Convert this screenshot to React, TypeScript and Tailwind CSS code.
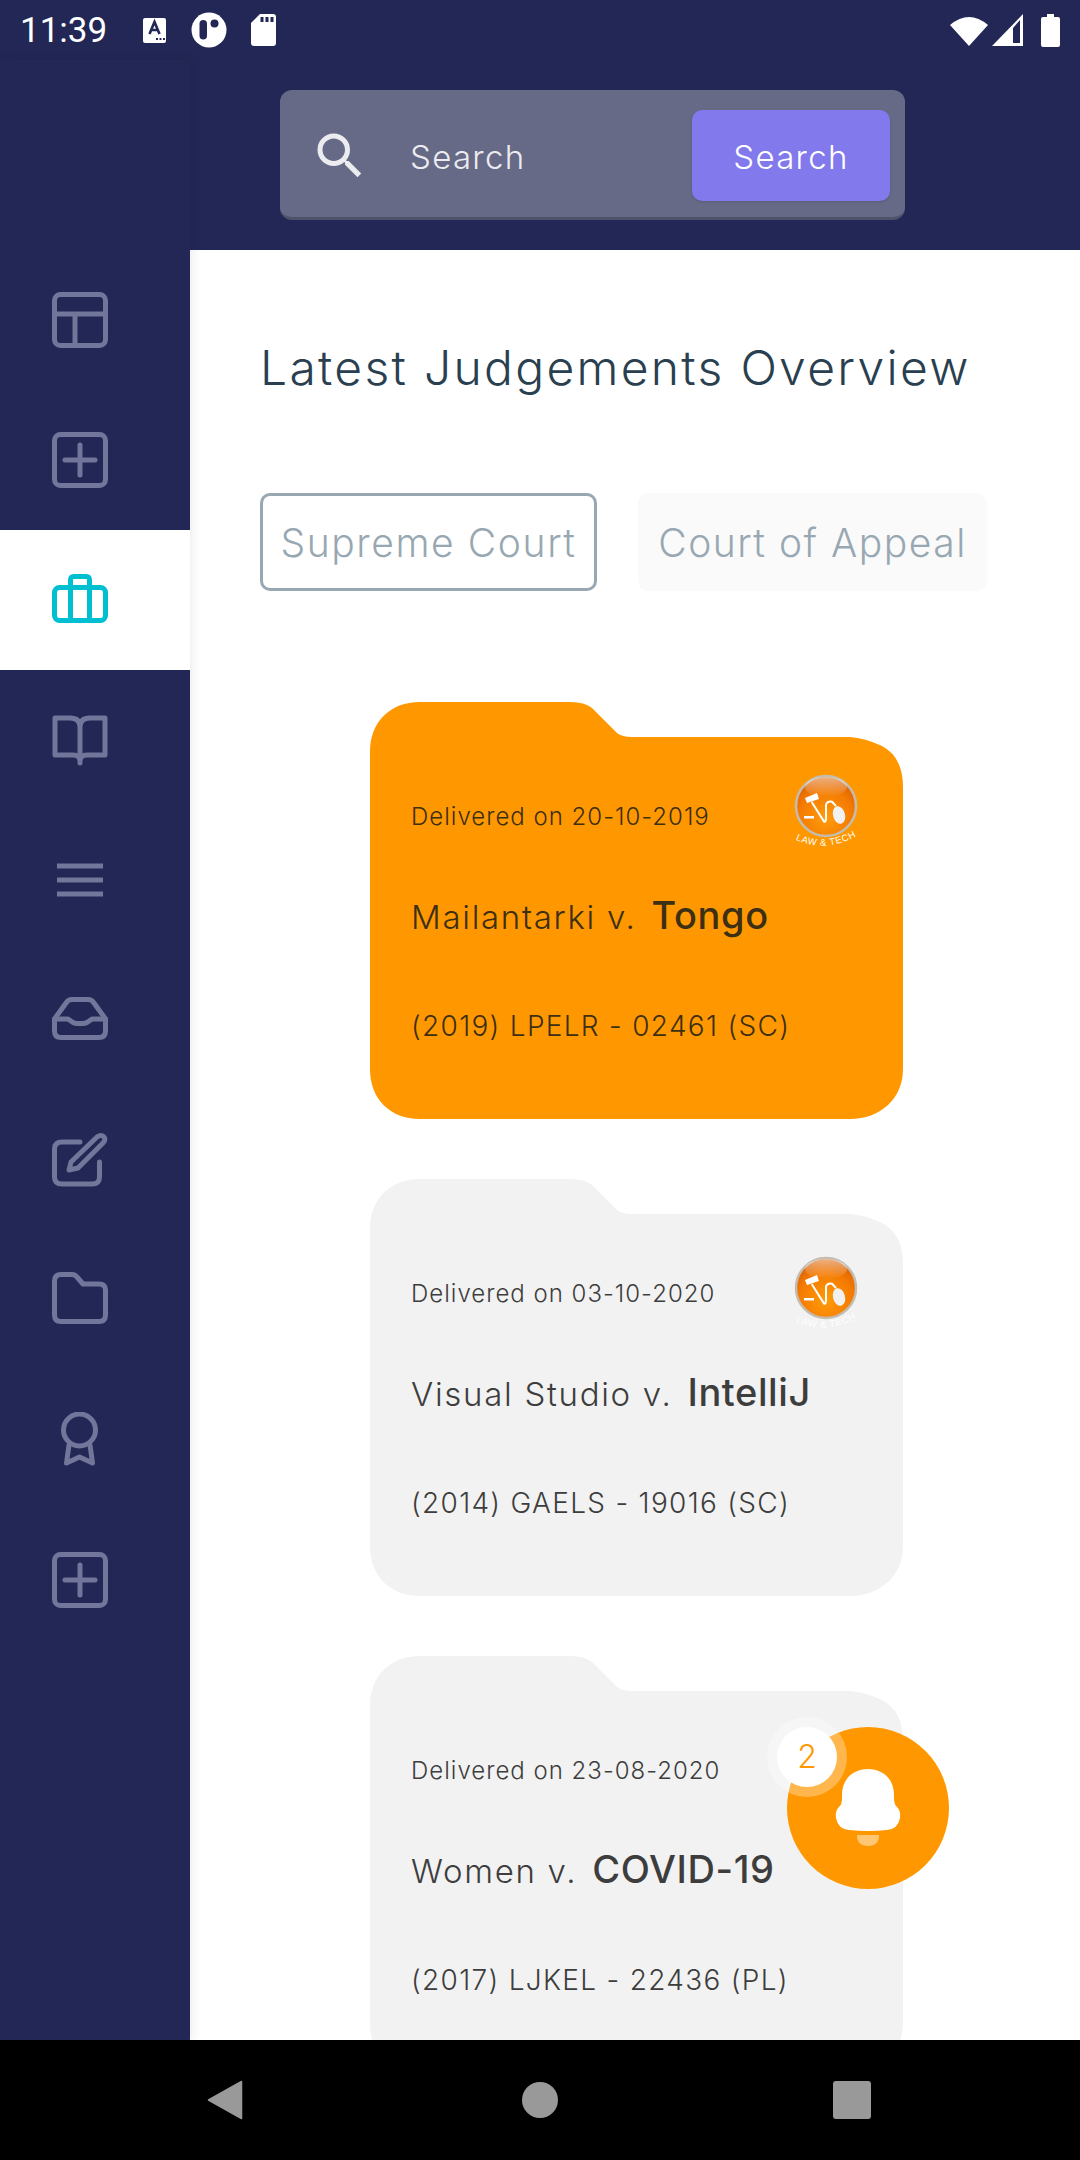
import React from 'react';
import { MdSearch } from 'react-icons/md';

const iconBase = { fill: 'none', stroke: 'currentColor', strokeWidth: 5, strokeLinecap: 'round', strokeLinejoin: 'round' } as const;

const Icon = ({ children }: { children: React.ReactNode }) => (
  <svg width="56" height="56" viewBox="0 0 56 56" {...iconBase}>
    {children}
  </svg>
);

const PlusBox = () => (
  <Icon>
    <rect x="2.5" y="2.5" width="51" height="51" rx="6" />
    <path d="M13 28H43M28 13V43" />
  </Icon>
);

const navItems = [
  <Icon key="layout">
    <rect x="2.5" y="2.5" width="51" height="51" rx="6" />
    <path d="M3 22H53M23 22V53" />
  </Icon>,
  <PlusBox key="plus" />,
  <Icon key="case">
    <rect x="2.5" y="15.5" width="51" height="33" rx="5" />
    <path d="M18.5 48V8Q18.5 4.5 22 4.5H34Q37.5 4.5 37.5 8V48" />
  </Icon>,
  <Icon key="book">
    <path d="M3 6H18Q28 6 28 15Q28 6 38 6H53V43H35Q28 43 28 49Q28 43 21 43H3ZM28 15V51" />
  </Icon>,
  <Icon key="menu">
    <path d="M5 14H51M5 28H51M5 42H51" strokeLinecap="butt" />
  </Icon>,
  <Icon key="inbox">
    <path d="M2.5 27L14 11Q16 7.5 20 7.5H36Q40 7.5 42 11L53.5 27V39Q53.5 45.5 47 45.5H9Q2.5 45.5 2.5 39Z" />
    <path d="M2.5 27H16L21 30.5Q23 31.5 25 31.5H31Q33 31.5 35 30.5L40 27H53.5" />
  </Icon>,
  <Icon key="edit">
    <path d="M28 10H10Q2.5 10 2.5 17V45Q2.5 52 10 52H40Q47.5 52 47.5 45V30" />
    <path d="M17 38L19 30L45 5Q49 2 52 5Q54 8 51 11L26 36Z" />
  </Icon>,
  <Icon key="folder">
    <path d="M2.5 9Q2.5 2.5 9 2.5H20Q23 2.5 25 5L31 12H47Q53.5 12 53.5 18V43Q53.5 49.5 47 49.5H9Q2.5 49.5 2.5 43Z" />
  </Icon>,
  <Icon key="award">
    <circle cx="27.5" cy="18" r="16" />
    <path d="M17 33L14.5 51L27.5 45L40.5 51L38 33" />
  </Icon>,
  <PlusBox key="plus2" />,
];

const Logo = ({ id }: { id: string }) => (
  <svg width="80" height="84" viewBox="0 0 80 84">
    <defs>
      <radialGradient id={`${id}-fill`} cx="50%" cy="70%" r="65%">
        <stop offset="0%" stopColor="#ff9c0a" />
        <stop offset="70%" stopColor="#f47a02" />
        <stop offset="100%" stopColor="#dd6404" />
      </radialGradient>
      <linearGradient id={`${id}-gloss`} x1="0" y1="0" x2="0" y2="1">
        <stop offset="0%" stopColor="#fff" stopOpacity="0.5" />
        <stop offset="100%" stopColor="#fff" stopOpacity="0" />
      </linearGradient>
      <path id={`${id}-arc`} d="M6 69Q40 86 74 65" fill="none" />
    </defs>
    <circle cx="40" cy="37" r="30" fill={`url(#${id}-fill)`} stroke="#c4bcae" strokeWidth="2.5" />
    <ellipse cx="40" cy="18" rx="21" ry="10" fill={`url(#${id}-gloss)`} />
    <path d="M19 29L31 24L33 30L21 34Z" fill="#fff" />
    <path d="M25.7 33L38 52.5Q40 54 40 48L40 36Q41 32 46 32.7L50 37" fill="none" stroke="#fff" strokeWidth="2" />
    <path d="M18 47H28V49.5H18Z" fill="#fff" />
    <ellipse cx="53" cy="46" rx="6" ry="9" fill="#f1f1f1" transform="rotate(-15 53 46)" />
    <text fill="#fff" fontSize="9.5" letterSpacing="0.6" fontFamily="'Liberation Sans', sans-serif">
      <textPath href={`#${id}-arc`} startOffset="50%" textAnchor="middle">
        LAW &amp; TECH
      </textPath>
    </text>
  </svg>
);

const cards = [
  { date: '20-10-2019', a: 'Mailantarki v.', b: 'Tongo', cite: '(2019) LPELR - 02461 (SC)', active: true, logo: true, logoTop: 'top-[67px]' },
  { date: '03-10-2020', a: 'Visual Studio v.', b: 'IntelliJ', cite: '(2014) GAELS - 19016 (SC)', active: false, logo: true, logoTop: 'top-[72px]' },
  { date: '23-08-2020', a: 'Women v.', b: 'COVID-19', cite: '(2017) LJKEL - 22436 (PL)', active: false, logo: false, logoTop: '' },
];

const Card = ({ card, index }: { card: (typeof cards)[number]; index: number }) => (
  <div className={`relative w-[533px] h-[417px] shrink-0 pl-[41px] pt-[99px] ${card.active ? 'text-[#3c2f14]' : 'text-[#3d3d3d]'}`}>
    <svg className="absolute inset-0" width="533" height="417" viewBox="0 0 533 417">
      <path
        d="M0 50C0 20 20 0 50 0L200 0Q215 0 222 6L247 31Q252 35 262 35L480 35Q495 36 512 44Q533 55 533 85L533 367C533 397 510 417 480 417L50 417C20 417 0 397 0 367Z"
        fill={card.active ? '#FF9800' : '#F2F2F2'}
      />
    </svg>
    {card.logo && (
      <div className={`absolute right-[37px] ${card.logoTop}`}>
        <Logo id={`logo-${index}`} />
      </div>
    )}
    <div className="relative font-['Inter',sans-serif]">
      <p className="text-[24px] leading-[32px] font-light tracking-[1px]">Delivered on {card.date}</p>
      <p className="mt-[64px] text-[33px] leading-[36px] font-light tracking-[1.7px] whitespace-nowrap">
        {card.a} <span className="ml-[4px] text-[38px] font-medium tracking-[0.6px]">{card.b}</span>
      </p>
      <p className="mt-[73px] text-[28px] leading-[36px] font-light tracking-[1.3px]">{card.cite}</p>
    </div>
  </div>
);

export default function App() {
  return (
    <div className="relative w-[1080px] h-[2160px] flex flex-col overflow-hidden bg-white font-['Inter',sans-serif]">
      {/* Status bar */}
      <div className="h-[60px] shrink-0 bg-[#222755] flex items-center justify-between pl-[20px] pr-[20px]">
        <div className="flex items-center">
          <span className="w-[88px] text-[35px] leading-none text-white font-['Roboto',sans-serif]">11:39</span>
          <svg className="ml-[35px]" width="23" height="25" viewBox="0 0 23 25">
            <rect width="23" height="25" rx="2" fill="#fff" />
            <path d="M6.5 16L11.5 4L16.5 16M8.5 12H14.5" fill="none" stroke="#222755" strokeWidth="2.6" />
            <path d="M13 21H15M16.5 21H18.5M20 21H22" stroke="#222755" strokeWidth="2" />
          </svg>
          <svg className="ml-[25px]" width="36" height="36" viewBox="0 0 36 36">
            <circle cx="18" cy="18" r="17.5" fill="#fff" />
            <rect x="8.5" y="8" width="7.5" height="19.5" rx="3.75" fill="#222755" />
            <circle cx="23.5" cy="11.5" r="4" fill="#222755" />
          </svg>
          <svg className="ml-[24px]" width="25" height="32" viewBox="0 0 25 32">
            <path d="M9 0H22Q25 0 25 3V29Q25 32 22 32H3Q0 32 0 29V9Z" fill="#fff" />
            <path d="M11 3V8M16 3V8M21 3V8" stroke="#222755" strokeWidth="3" />
          </svg>
        </div>
        <div className="flex items-center">
          <svg width="38" height="31" viewBox="0 0 38 31">
            <path d="M19 31L0 10Q19 -6 38 10Z" fill="#fff" />
          </svg>
          <svg className="ml-[4px]" width="31" height="32" viewBox="0 0 31 32">
            <path d="M0 32L31 0V32Z" fill="#fff" />
            <path d="M21 14L28 6V29H21Z" fill="#222755" />
          </svg>
          <svg className="ml-[18px]" width="19" height="33" viewBox="0 0 19 33">
            <path d="M6 0H13V3H17Q19 3 19 5V31Q19 33 17 33H2Q0 33 0 31V5Q0 3 2 3H6Z" fill="#fff" />
          </svg>
        </div>
      </div>

      <div className="flex-1 flex min-h-0">
        {/* Sidebar */}
        <aside className="relative z-10 w-[190px] shrink-0 bg-[#222755] pt-[190px] shadow-[3px_0_10px_rgba(0,0,0,0.07)]">
          {navItems.map((icon, i) => (
            <div
              key={i}
              className={`h-[140px] pl-[52px] flex items-center ${i === 2 ? 'bg-white text-[#00BFD0]' : 'text-[#71769A]'}`}
            >
              {icon}
            </div>
          ))}
        </aside>

        <main className="flex-1 min-w-0 flex flex-col overflow-hidden">
          {/* Search header */}
          <div className="h-[190px] shrink-0 bg-[#222755] pt-[30px] pl-[90px]">
            <div className="w-[625px] h-[130px] pt-[4px] rounded-[12px] bg-[#666A86] border-b-[3px] border-[#50516a] flex items-center pl-[30px] pr-[15px] text-[#ececf0]">
              <MdSearch size={60} className="shrink-0" />
              <span className="ml-[40px] pt-[4px] flex-1 text-[33px] font-light tracking-[1.3px]">Search</span>
              <button className="w-[198px] h-[91px] pt-[4px] rounded-[10px] bg-[#8279EC] text-white text-[33px] font-light tracking-[1.3px] shadow-sm">
                Search
              </button>
            </div>
          </div>

          {/* Content */}
          <div className="flex-1 min-h-0 overflow-hidden pl-[70px] pt-[88px]">
            <h1 className="text-[48px] leading-[60px] font-light text-[#2a3f4f] tracking-[2.3px] whitespace-nowrap">
              Latest Judgements Overview
            </h1>
            <div className="mt-[95px] flex gap-[41px]">
              <div className="w-[337px] h-[98px] pt-[2px] rounded-[10px] border-[3px] border-[#98A8B2] flex items-center justify-center text-[39px] font-light text-[#98A8B2] tracking-[1.6px]">
                Supreme Court
              </div>
              <div className="w-[349px] h-[98px] pt-[2px] rounded-[10px] bg-[#FAFAFA] flex items-center justify-center text-[39px] font-light text-[#98A8B2] tracking-[1.5px]">
                Court of Appeal
              </div>
            </div>
            <div className="mt-[111px] ml-[110px] flex flex-col gap-[60px]">
              {cards.map((c, i) => (
                <Card key={c.date} card={c} index={i} />
              ))}
            </div>
          </div>
        </main>
      </div>

      {/* Android nav */}
      <div className="h-[120px] shrink-0 bg-black flex items-center pl-[207px]">
        <svg width="36" height="40" viewBox="0 0 36 40">
          <path d="M34.5 1.5V38.5L1.5 20Z" fill="#999" stroke="#999" strokeWidth="1.5" strokeLinejoin="round" />
        </svg>
        <div className="ml-[279px] w-[36px] h-[36px] rounded-full bg-[#999]" />
        <div className="ml-[275px] w-[38px] h-[38px] rounded-[3px] bg-[#999]" />
      </div>

      {/* Notifications button */}
      <div className="absolute left-[787px] top-[1727px] w-[162px] h-[162px] rounded-full bg-[#FF9800] flex items-center justify-center">
        <svg width="66" height="78" viewBox="0 0 66 78">
          <path
            d="M7 26C7 10 18 0 33 0C48 0 59 10 59 26V30Q59 35 62 38Q66 42 65 49Q63 60 52 61Q33 63 14 61Q3 60 1 49Q0 42 4 38Q7 35 7 30Z"
            fill="#fff"
          />
          <path d="M22 66H44Q44 77 33 77Q22 77 22 66Z" fill="#fff" opacity="0.45" />
        </svg>
      </div>
      <div className="absolute left-[767px] top-[1717px] w-[80px] h-[80px] rounded-full bg-white/30 flex items-center justify-center">
        <div className="w-[60px] h-[60px] rounded-full bg-white flex items-center justify-center text-[32px] text-[#FF9800] font-light">
          2
        </div>
      </div>
    </div>
  );
}
